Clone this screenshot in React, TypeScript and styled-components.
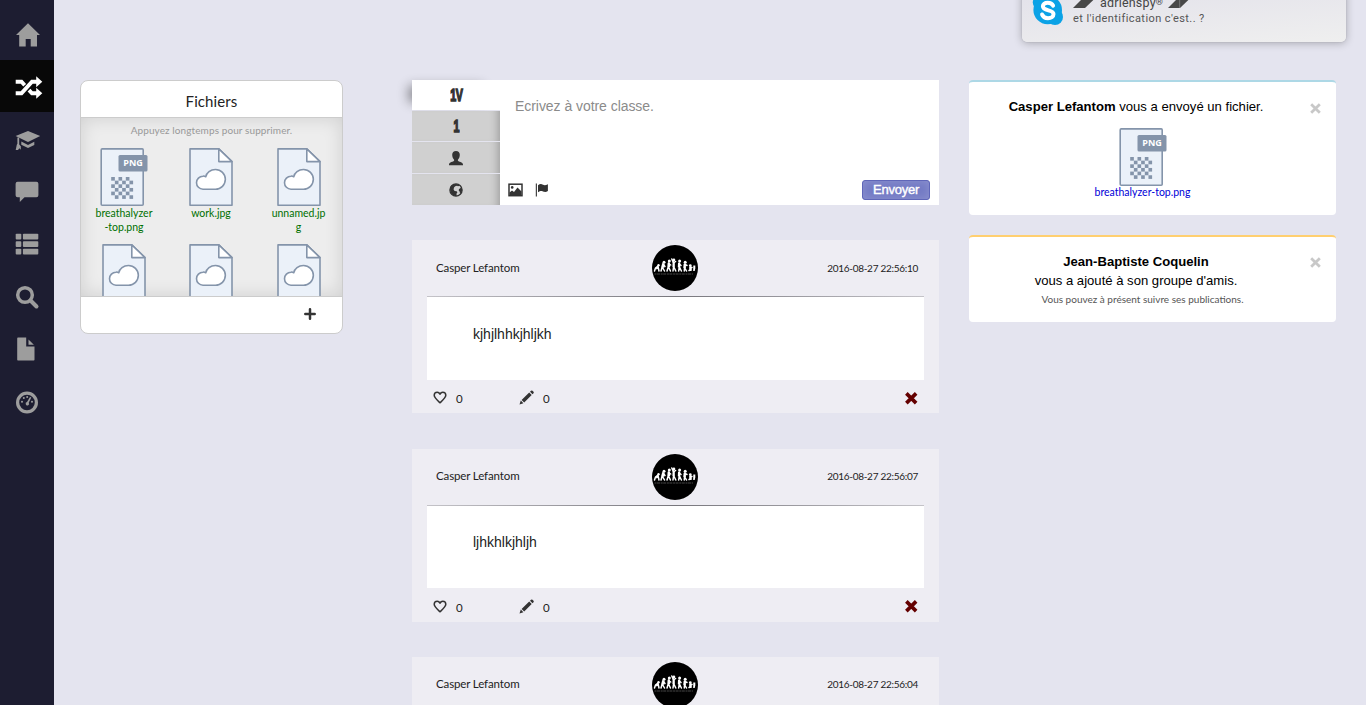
import React from 'react';
import styled, { createGlobalStyle } from 'styled-components';

const Global = createGlobalStyle`
  * { box-sizing: border-box; }
  body { margin: 0; background: #e4e4ef; overflow: hidden; font-family: "Liberation Sans", Arial, sans-serif; color: #333; }
  svg { display: block; flex: none; overflow: visible; }
`;

const rounded = '"Lato", "Open Sans", sans-serif';

const Page = styled.div`
  display: flex;
  height: 705px;
  overflow: hidden;
  position: relative;
`;
const Sidebar = styled.nav`
  width: 54px;
  flex: none;
  background: #1d1d31;
  padding-top: 7.6px;
`;
const NavItem = styled.a<{ $active?: boolean }>`
  display: flex;
  align-items: center;
  padding: 2px 0 0 15px;
  height: 52.4px;
  background: ${p => (p.$active ? '#080808' : 'transparent')};
  color: ${p => (p.$active ? '#fff' : '#9d9d9d')};
`;
const Main = styled.main`
  display: grid;
  grid-template-columns: 332px 557px 367px;
  align-items: start;
  flex: 1;
  padding: 80px 30px 0 26px;
`;

const Panel = styled.section`
  width: 263px;
  border: 1px solid #ccc;
  border-radius: 8px;
  background: #fff;
  height: 254px;
  overflow: hidden;
  display: flex;
  flex-direction: column;
`;
const PanelTitle = styled.h2`
  margin: 0;
  height: 37px;
  padding-top: 4px;
  border-bottom: 1px solid #ccc;
  font: 400 15px/32px ${rounded};
  letter-spacing: 0.1px;
  text-align: center;
  color: #222;
`;
const PanelBody = styled.div`
  height: 178px;
  overflow: hidden;
  background: #ededed;
  box-shadow: inset 0 0 18px rgba(0, 0, 0, 0.13);
  padding-top: 5px;
`;
const Hint = styled.p`
  margin: 0 0 11px;
  font: 400 10px/14px ${rounded};
  letter-spacing: 0.1px;
  text-align: center;
  color: #999;
`;
const FileGrid = styled.div`
  display: grid;
  grid-template-columns: 86px 88px 87px;
  grid-auto-rows: 96px;
`;
const FileCell = styled.a`
  display: flex;
  flex-direction: column;
  align-items: center;
`;
const FileName = styled.span<{ $link?: boolean }>`
  margin-top: ${p => (p.$link ? -1 : -0.5)}px;
  font: 400 10.5px/14px ${rounded};
  text-align: center;
  white-space: pre-line;
  color: ${p => (p.$link ? '#0000d8' : '#007000')};
`;
const PanelFooter = styled.div`
  flex: 1;
  border-top: 1px solid #ccc;
  display: flex;
  justify-content: flex-end;
  padding: 11px 26px 0 0;
`;

const Feed = styled.div`
  width: 527px;
  display: flex;
  flex-direction: column;
  gap: 35.3px;
`;
const Composer = styled.section`
  height: 125px;
  display: flex;
`;
const Audience = styled.div`
  width: 88px;
  display: grid;
  grid-template-rows: 30px 30px 31px 31px;
  gap: 1px;
`;
const AudienceTab = styled.button<{ $active?: boolean }>`
  border: 0;
  padding: 0;
  display: flex;
  align-items: center;
  justify-content: center;
  color: #333;
  background: ${p => (p.$active ? '#fff' : '#d0d0d0')};
  box-shadow: ${p => (p.$active ? '-10px -1px 12px -7px rgba(0,0,0,.45)' : 'inset -9px 0 9px -7px rgba(0,0,0,.25)')};
`;
const Condensed = styled.b`
  font: 700 16.5px/20px "Liberation Sans", Arial, sans-serif;
  letter-spacing: -0.8px;
  transform: scaleX(0.65);
  -webkit-text-stroke: 1.4px #333;
`;
const Editor = styled.div`
  flex: 1;
  background: #fff;
  display: flex;
  flex-direction: column;
  justify-content: space-between;
  padding: 17px 9px 5px 8px;
`;
const Placeholder = styled.div`
  padding-left: 7px;
  font-size: 14px;
  line-height: 18px;
  letter-spacing: -0.05px;
  color: #8b8b8b;
`;
const Tools = styled.div`
  display: flex;
  align-items: center;
  gap: 12px;
`;
const Send = styled.button`
  margin-left: auto;
  width: 68px;
  height: 20px;
  padding: 0 0 1px;
  border: 1px solid #5f66b8;
  border-radius: 3px;
  background: #747bc5;
  box-shadow: inset 0 0 9px rgba(255, 255, 255, 0.18);
  color: #fff;
  font: 400 13px/17px "Liberation Sans", Arial, sans-serif;
  letter-spacing: -0.25px;
  -webkit-text-stroke: 0.4px #fff;
`;

const PostCard = styled.article`
  height: 173px;
  background: #eeedf3;
  padding: 0 15px;
`;
const PostHead = styled.header`
  height: 56px;
  padding: 0 6px 0 5px;
  display: grid;
  grid-template-columns: 220px 46px 1fr;
  align-items: center;
  font: 400 11.5px/16px ${rounded};
  color: #222;
`;
const Author = styled.span`
  padding: 0 0 1px 4px;
  letter-spacing: -0.13px;
`;
const Stamp = styled.time`
  padding-bottom: 1px;
  text-align: right;
  font-size: 10px;
  letter-spacing: -0.28px;
`;
const Rule = styled.div`
  height: 1px;
  background: linear-gradient(90deg, #c4c3c8, #77767c 50%, #c4c3c8);
`;
const PostText = styled.div`
  height: 82.8px;
  background: #fff;
  padding: 28.7px 46px 0;
  font-size: 14px;
  line-height: 17px;
  color: #222;
`;
const PostFoot = styled.footer`
  height: 33px;
  display: flex;
  align-items: center;
  padding: 2.6px 7px 0 6px;
`;
const Count = styled.span`
  width: 64px;
  padding: 3px 0 0 9px;
  font: 400 11.5px/14px ${rounded};
  color: #222;
`;
const EditMark = styled.span`
  margin-left: 8px;
`;
const Remove = styled.span`
  margin-left: auto;
`;

const Notices = styled.div`
  display: flex;
  flex-direction: column;
  gap: 20px;
`;
const Notice = styled.section<{ $accent: string; $height: number }>`
  height: ${p => p.$height}px;
  border-top: 2px solid ${p => p.$accent};
  border-radius: 4px;
  background: #fff;
  position: relative;
  padding: 15px 33px 0 0;
  display: flex;
  flex-direction: column;
  align-items: center;
  font-size: 13.1px;
  line-height: 19px;
  color: #000;
`;
const Dismiss = styled.button<{ $top: number }>`
  position: absolute;
  top: ${p => p.$top}px;
  right: 15px;
  padding: 0;
  border: 0;
  background: none;
`;
const Attachment = styled.div`
  display: flex;
  flex-direction: column;
  align-items: center;
  margin: 12px 0 0 13px;
`;
const Small = styled.small`
  margin-left: 13px;
  font: 400 10px/18px ${rounded};
  color: #555;
`;

const Toast = styled.aside`
  position: absolute;
  left: 1022px;
  top: -12px;
  width: 324px;
  height: 54px;
  border-radius: 5px;
  background: linear-gradient(175deg, #e2e1ea, #efefef);
  box-shadow: 0 1px 9px rgba(0, 0, 0, 0.28), 0 0 1px rgba(0, 0, 0, 0.3);
  display: flex;
  padding: 5px 0 0 10px;
  gap: 10px;
`;
const ToastText = styled.div`
  font: 400 11px/17px Roboto, sans-serif;
  letter-spacing: 0.42px;
  color: #555;
`;
const ToastName = styled.div`
  display: flex;
  align-items: center;
  gap: 5px;
  height: 17px;
  padding-top: 1px;
  font-size: 12.5px;
  letter-spacing: 0.2px;
  color: #444;
`;
const Handle = styled.span`
  padding-left: 2px;
`;
const Registered = styled.span`
  font-size: 9px;
  line-height: 1;
  vertical-align: 2px;
`;

const GREY = '#8494aa';

const HomeIcon = () => (
  <svg width="26" height="24" viewBox="0 0 26 24" fill="currentColor">
    <path d="M13 .3 25 12h-3v11.500h-6.300V16h-5v7.500H4.200V12H1z" />
  </svg>
);
const ShuffleIcon = () => (
  <svg width="28" height="24" viewBox="0 0 28 24">
    <g fill="none" stroke="currentColor" strokeWidth="3.900">
      <path d="M.7 18.300h5.800L17 6.700h5" />
      <path d="M.7 6.700h5.800l3.200 3.500" />
      <path d="m14 15.200 3 3.100h5" />
    </g>
    <path fill="currentColor" d="M21.200 1.200 27.300 6.700l-6.100 5.500zM21.200 12.800l6.100 5.500-6.100 5.500z" />
  </svg>
);
const CapIcon = () => (
  <svg width="26" height="20" viewBox="0 0 26 20" fill="currentColor">
    <path d="M13 1 25.200 6 13 12 .6 6zM6.300 11.600 13 14.900l6.300-3.100v3.100L13 18l-6.700-3.200z" />
    <path d="M2.400 7.500h1.800v7l1.600 1.700v3.500l-1.400-1.400L3 19.900H.7l1.100-5.200.6-1z" />
  </svg>
);
const ChatIcon = () => (
  <svg width="24" height="22" viewBox="0 0 24 22" fill="currentColor">
    <path d="M2.600.7h18.800a2 2 0 0 1 2 2V14.200a2 2 0 0 1-2 2H9.500L4.800 21V16.200H2.600a2 2 0 0 1-2-2V2.700a2 2 0 0 1 2-2z" />
  </svg>
);
const ListIcon = () => (
  <svg width="24" height="22" viewBox="0 0 24 22" fill="currentColor">
    {[0.7, 8.2, 15.7].map(y => (
      <g key={y}>
        <rect x=".7" y={y} width="5.600" height="5.800" rx=".9" />
        <rect x="7.900" y={y} width="15.400" height="5.800" rx=".9" />
      </g>
    ))}
  </svg>
);
const SearchIcon = () => (
  <svg width="24" height="24" viewBox="0 0 24 24" fill="none" stroke="currentColor">
    <circle cx="10" cy="10" r="7.300" strokeWidth="3.500" />
    <path d="m15.500 15.500 6 6" strokeWidth="4" strokeLinecap="round" />
  </svg>
);
const PageIcon = () => (
  <svg width="24" height="24" viewBox="0 0 24 24" fill="currentColor">
    <path d="M3 .6h8.200v9h8.300v13.100a.8.8 0 0 1-.8.8H3a.8.8 0 0 1-.8-.8V1.400A.8.800 0 0 1 3 .6z" />
    <path d="M13.500 2.600v5.200h5.400z" />
  </svg>
);
const GaugeIcon = () => (
  <svg width="24" height="24" viewBox="0 0 24 24" fill="currentColor">
    <circle cx="12" cy="12.500" r="9.400" fill="none" stroke="currentColor" strokeWidth="3.200" />
    <circle cx="7" cy="11.700" r="1" />
    <circle cx="8.800" cy="8" r="1" />
    <circle cx="12.200" cy="7" r="1" />
    <circle cx="17" cy="11.700" r="1" />
    <path d="m15 6.900 1.300.6-2.600 5.200a1.700 1.700 0 1 1-1.700-.6z" />
  </svg>
);

const PngIcon = () => (
  <svg width="48" height="58" viewBox="0 0 48 58">
    <rect x="1.200" y=".9" width="42" height="56.300" rx="1" fill="#ebf1f9" stroke={GREY} strokeWidth="1.600" />
    <rect x="18.500" y="7" width="29" height="16.500" rx="1.500" fill={GREY} />
    <text x="33" y="18.400" textAnchor="middle" fill="#fff" fontFamily="Open Sans, sans-serif" fontSize="9" fontWeight="700">PNG</text>
    <g fill={GREY}>
      {Array.from({ length: 36 }, (_, i) => {
        const c = i % 6;
        const r = Math.floor(i / 6);
        return (c + r) % 2 === 0 ? <rect key={i} x={11.2 + c * 3.65} y={29 + r * 3.65} width="3.650" height="3.650" /> : null;
      })}
    </g>
  </svg>
);
const CloudFileIcon = () => (
  <svg width="44" height="58" viewBox="0 0 44 58" stroke={GREY} strokeWidth="1.600" strokeLinejoin="round">
    <path d="M1 .9h28.800L43 13.600v43.600H1z" fill="#ebf1f9" />
    <path d="M29.800.9v12.700H43z" fill="#fff" />
    <path d="M14 41.200h12.500a9.800 9.800 0 0 0 0-19.700c-5 0-9 3-9.800 7.300C15.500 28 14.400 28 14 28.200a6.500 6.500 0 0 0 0 13z" fill="#fff" />
  </svg>
);

const PlusIcon = () => (
  <svg width="12" height="12" viewBox="0 0 12 12" stroke="#333" strokeWidth="2.500" strokeLinecap="round">
    <path d="M6 1.300v9.400M1.300 6h9.400" />
  </svg>
);
const UserIcon = () => (
  <svg width="16" height="16" viewBox="0 0 16 16" fill="currentColor">
    <path d="M8 1c2.400 0 3.800 1.500 3.800 3.700 0 2-.8 4-1.900 5v1c.5.900 5.100 1.400 5.100 3.800v.7H1v-.7c0-2.400 4.600-2.900 5.100-3.800v-1c-1.100-1-1.900-3-1.900-5C4.200 2.500 5.600 1 8 1z" />
  </svg>
);
const GlobeIcon = () => (
  <svg width="14" height="14" viewBox="0 0 14 14">
    <circle cx="7" cy="7" r="6.100" fill="#d0d0d0" stroke="#333" strokeWidth="1.300" />
    <path fill="#333" d="M1 5C1.800 2.400 4 .9 7 .9l2.500.6 1 1.300-1.500.5-1-.6-1.800.5L5 4.500 4.600 6.500l1 1.500 2 .3.800 1-.9 1.500.2 2.300C4 13 .7 10 1 5zM12.300 4l.9 3-.6 2-1.500 1.500-.5-2-.9-1 .3-1.500 1-.6z" />
  </svg>
);
const PictureIcon = () => (
  <svg width="15" height="14" viewBox="0 0 15 14">
    <rect x="1" y="1.200" width="13" height="11.500" fill="#fff" stroke="#333" strokeWidth="1.500" />
    <circle cx="4.200" cy="4.400" r="1.300" fill="#333" />
    <path d="m1.500 12.500 0-3 2.500-2 2 1.500L9.500 4.500l4 4v4z" fill="#333" />
  </svg>
);
const FlagIcon = () => (
  <svg width="14" height="14" viewBox="0 0 14 14" fill="#333">
    <path d="M.8.600h1.100v13H.8zM3 2.200c2-1.500 3.500-1.200 5-.5s2.700.6 4.900-.5v6.900c-2 1.200-3.500.9-5 .3S5 7.900 3 9.300z" />
  </svg>
);
const HeartIcon = () => (
  <svg width="14" height="13" viewBox="0 0 13 13" fill="none" stroke="#333" strokeWidth="1.500" strokeLinejoin="round">
    <path d="M6.500 11.800C3 8.600.7 6.700.7 4.300.7 2.400 2.100 1.200 3.700 1.200c1.200 0 2.300.8 2.800 2 .5-1.200 1.600-2 2.800-2 1.600 0 3 1.200 3 3.100 0 2.400-2.300 4.300-5.800 7.500z" />
  </svg>
);
const PencilIcon = () => (
  <svg width="15" height="15" viewBox="0 0 15 15" fill="#333">
    <path d="M.5 14.500 1.800 10.600 4.400 13.200zM2.600 9.900 10.200 2.600l2.500 2.500-7.500 7.400zM11 1.800l1-1a1.100 1.100 0 0 1 1.500 0l1 1a1.100 1.100 0 0 1 0 1.500l-1 1z" />
  </svg>
);
const CrossIcon = ({ size, color, weight }: { size: number; color: string; weight: number }) => (
  <svg width={size} height={size} viewBox="0 0 12 12" stroke={color} strokeWidth={weight}>
    <path d="m1.300 1.300 9.400 9.400M10.700 1.300l-9.400 9.400" />
  </svg>
);

const Avatar = () => (
  <svg width="46" height="46" viewBox="0 0 46 46">
    <circle cx="23" cy="23" r="23" fill="#000" />
    <g fill="none" stroke="#fff" strokeWidth="1.500" strokeLinecap="round" strokeLinejoin="round">
      <path d="m2.500 26 1-3 2.500-1.800M6 21.500 7 26" />
      <path d="m9 26 1-3.500 1-3.500M10.500 22.500l2 3.500M11 19l2 2.500" />
      <path d="m15 26 1.200-4 .4-4M16.400 21.500l2 4.500M16.700 18.500l2 1.500" />
      <path d="m21 26 .6-4.500V17M21.600 21.500l2.200 4.500M21.600 18l2-1.500M21.300 17.500 19.800 14" />
      <path d="m26.700 26 .5-4V18M27.200 21.500l2.200 4.500M27 18.500l2 2" />
      <path d="m32.300 26 .2-3.500.3-3.500M32.500 22.500l2 3.500M33 19.500l2 1" />
      <path d="m37 25.500 1.800-.5V22M38.500 22.500H40" />
    </g>
    <g fill="#fff">
      <path d="M3.500 22.500 6 21l.7 2.500-2.200 1zM10 18.300l2.500.5-.2 4H9.500zM15.700 17.800l2.200-.3.300 4.500h-2.500zM20.700 17h2v5h-2.200zM26 18l2.200-.4.100 4.600h-2.500zM31.600 18.800h2.200l.1 4.200h-2.500z" />
      <circle cx="6.500" cy="20.300" r="1.200" />
      <circle cx="12" cy="17.200" r="1.500" />
      <circle cx="17.300" cy="15.900" r="1.500" />
      <circle cx="21.900" cy="15" r="1.400" />
      <circle cx="27.600" cy="16" r="1.500" />
      <circle cx="33.200" cy="17.200" r="1.500" />
      <circle cx="38.300" cy="20.700" r="1.400" />
      <path d="M41.300 20.500h2v3l-.6 2.500h-1.500zM37.200 22h2.300v4h-2.300z" />
    </g>
    <path d="M2.500 29H41" stroke="#777" strokeWidth=".6" strokeDasharray="2 .5 3 .7" />
  </svg>
);
const SkypeIcon = () => (
  <svg width="31" height="34" viewBox="0 0 31 34">
    <g fill="#0ba2e6">
      <circle cx="15.700" cy="17" r="14.300" />
      <circle cx="8.500" cy="9.500" r="7.700" />
      <circle cx="23" cy="24" r="8" />
    </g>
    <path d="M21.100 12.700c-1-2.100-3-3-5.400-3-3 0-4.800 1.500-4.800 3.600 0 5.400 10.600 2.700 10.600 7.700 0 2.800-2.400 4.200-5.500 4.200-3 0-5-1.200-5.900-3.700" fill="none" stroke="#fff" strokeWidth="4" strokeLinecap="round" />
  </svg>
);
const Blades = ({ split }: { split?: boolean }) => (
  <svg width="20" height="13" viewBox="0 0 20 13">
    <path d="M0 12 12 0h12.500l-12.500 12z" fill="#484848" />
    {split && <path d="M11.700 0v12" stroke="#999" strokeWidth=".6" />}
  </svg>
);

const nav = [HomeIcon, ShuffleIcon, CapIcon, ChatIcon, ListIcon, SearchIcon, PageIcon, GaugeIcon];
const files = ['breathalyzer\n-top.png', 'work.jpg', 'unnamed.jp\ng', '', '', ''];
const posts = [
  { text: 'kjhjlhhkjhljkh', time: '2016-08-27 22:56:10' },
  { text: 'ljhkhlkjhljh', time: '2016-08-27 22:56:07' },
  { text: '', time: '2016-08-27 22:56:04' },
];

const PostActions = () => (
  <PostFoot>
    <HeartIcon />
    <Count>0</Count>
    <EditMark><PencilIcon /></EditMark>
    <Count>0</Count>
    <Remove><CrossIcon size={12.5} color="#640000" weight={3.5} /></Remove>
  </PostFoot>
);
const Post = ({ text, time }: { text: string; time: string }) => (
  <PostCard>
    <PostHead>
      <Author>Casper Lefantom</Author>
      <Avatar />
      <Stamp>{time}</Stamp>
    </PostHead>
    <Rule />
    <PostText>{text}</PostText>
    {text && <PostActions />}
  </PostCard>
);

export default function App() {
  return (
    <Page>
      <Global />
      <Sidebar>
        {nav.map((Icon, i) => (
          <NavItem key={i} $active={i === 1}><Icon /></NavItem>
        ))}
      </Sidebar>
      <Main>
        <Panel>
          <PanelTitle>Fichiers</PanelTitle>
          <PanelBody>
            <Hint>Appuyez longtemps pour supprimer.</Hint>
            <FileGrid>
              {files.map((name, i) => (
                <FileCell key={i}>
                  {i === 0 ? <PngIcon /> : <CloudFileIcon />}
                  <FileName>{name}</FileName>
                </FileCell>
              ))}
            </FileGrid>
          </PanelBody>
          <PanelFooter><PlusIcon /></PanelFooter>
        </Panel>

        <Feed>
          <Composer>
            <Audience>
              <AudienceTab $active><Condensed>1V</Condensed></AudienceTab>
              <AudienceTab><Condensed>1</Condensed></AudienceTab>
              <AudienceTab><UserIcon /></AudienceTab>
              <AudienceTab><GlobeIcon /></AudienceTab>
            </Audience>
            <Editor>
              <Placeholder>Ecrivez à votre classe.</Placeholder>
              <Tools>
                <PictureIcon />
                <FlagIcon />
                <Send>Envoyer</Send>
              </Tools>
            </Editor>
          </Composer>
          {posts.map(p => <Post key={p.time} {...p} />)}
        </Feed>

        <Notices>
          <Notice $accent="#add8e6" $height={135}>
            <span><b>Casper Lefantom</b> vous a envoyé un fichier.</span>
            <Attachment>
              <PngIcon />
              <FileName $link>breathalyzer-top.png</FileName>
            </Attachment>
            <Dismiss $top={21}><CrossIcon size={11} color="#c8c8c8" weight={3} /></Dismiss>
          </Notice>
          <Notice $accent="#ffcf70" $height={87}>
            <b>Jean-Baptiste Coquelin</b>
            <span>vous a ajouté à son groupe d'amis.</span>
            <Small>Vous pouvez à présent suivre ses publications.</Small>
            <Dismiss $top={20}><CrossIcon size={11} color="#c8c8c8" weight={3} /></Dismiss>
          </Notice>
        </Notices>
      </Main>
      <Toast>
        <SkypeIcon />
        <ToastText>
          <ToastName><Blades /><Handle>adrienspy<Registered>®</Registered></Handle><Blades split /></ToastName>
          et l'identification c'est.. ?
        </ToastText>
      </Toast>
    </Page>
  );
}
